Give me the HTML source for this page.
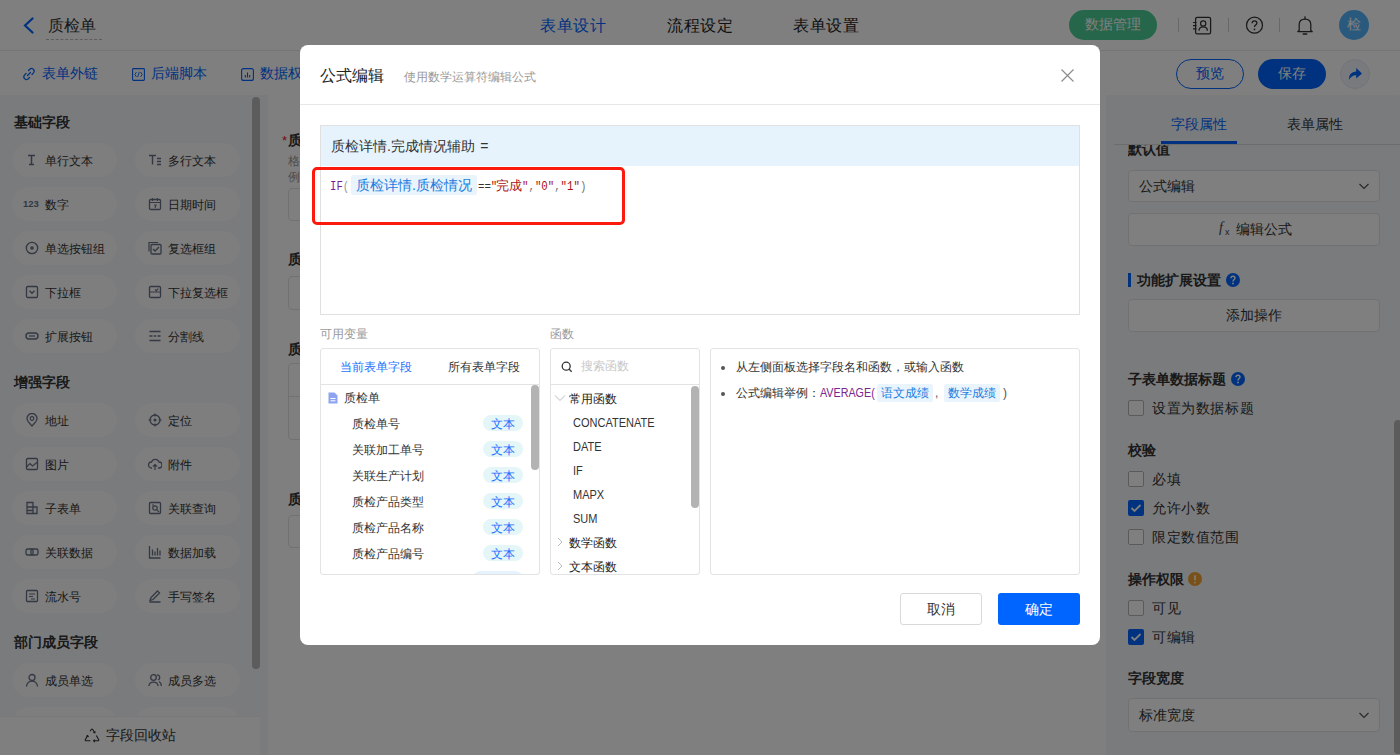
<!DOCTYPE html>
<html><head><meta charset="utf-8">
<style>
*{box-sizing:border-box;margin:0;padding:0}
html,body{width:1400px;height:755px;overflow:hidden;background:#fff;font-family:"Liberation Sans",sans-serif;color:#333}
.a{position:absolute}
.t{position:absolute;white-space:nowrap;line-height:1}
/* header */
#hdr{left:0;top:0;width:1400px;height:51px;background:#fff;border-bottom:1px solid #ececec}
#tb{left:0;top:51px;width:1400px;height:44px;background:#fff;box-shadow:0 1px 3px rgba(0,0,0,.06)}
#lp{left:0;top:95px;width:268px;height:660px;background:#f5f7fa}
#gap{display:none}
#cv{left:268px;top:95px;width:838px;height:660px;background:#fff}
#gap2{display:none}
#rp{left:1106px;top:96px;width:294px;height:659px;background:#f5f7fa}
.pill{position:absolute;width:105px;height:34px;border-radius:17px;background:#fcfcfd;font-size:12px;color:#333}
.pill span{position:absolute;left:33px;top:12px;line-height:12px;white-space:nowrap}
.pill svg{position:absolute;left:13px;top:10px}
.sec{position:absolute;left:14px;font-size:14px;font-weight:bold;color:#333;line-height:14px}
#mask{left:0;top:0;width:1400px;height:755px;background:rgba(0,0,0,.5)}
#modal{left:300px;top:45px;width:800px;height:600px;background:#fff;border-radius:8px}
</style></head><body>
<div id="hdr" class="a"></div>
<div id="tb" class="a"></div>
<div id="lp" class="a"></div>
<div id="gap" class="a"></div>
<div id="cv" class="a"></div>
<div id="gap2" class="a"></div>
<div id="rp" class="a"></div>


<div class="sec" style="top:115px">基础字段</div>
<div class="sec" style="top:375px">增强字段</div>
<div class="sec" style="top:635px">部门成员字段</div>
<div class="pill" style="left:12px;top:143px"><svg width="14" height="14" viewBox="0 0 14 14"><path d="M3 2.5h7M6.5 2.5v9M4 11.5h5" stroke="#667085" stroke-width="1.5" fill="none"/></svg><span>单行文本</span></div>
<div class="pill" style="left:135px;top:143px"><svg width="14" height="14" viewBox="0 0 14 14"><path d="M1 2.5h7M4.5 2.5v9M9 5.5h4M9 8.5h4M9 11.5h4" stroke="#667085" stroke-width="1.4" fill="none"/></svg><span>多行文本</span></div>
<div class="pill" style="left:12px;top:187px"><svg width="18" height="14" viewBox="0 0 18 14" style="left:11px"><text x="0" y="10" font-family="Liberation Sans" font-weight="bold" font-size="9.5" fill="#667085">123</text></svg><span>数字</span></div>
<div class="pill" style="left:135px;top:187px"><svg width="14" height="14" viewBox="0 0 14 14"><rect x="1.5" y="2.5" width="11" height="10" rx="1.2" stroke="#667085" stroke-width="1.3" fill="none"/><path d="M1.5 5.5h11M4.5 1v3M9.5 1v3M6 8h2l-1 3" stroke="#667085" stroke-width="1.1" fill="none"/></svg><span>日期时间</span></div>
<div class="pill" style="left:12px;top:231px"><svg width="14" height="14" viewBox="0 0 14 14"><circle cx="7" cy="7" r="5.7" stroke="#667085" stroke-width="1.3" fill="none"/><circle cx="7" cy="7" r="1.8" fill="#667085"/></svg><span>单选按钮组</span></div>
<div class="pill" style="left:135px;top:231px"><svg width="14" height="14" viewBox="0 0 14 14"><path d="M1 10.5V1.5h9" stroke="#667085" stroke-width="1.2" fill="none"/><rect x="3" y="3.5" width="10" height="9.5" rx="1" stroke="#667085" stroke-width="1.3" fill="none"/><path d="M5 8l2 2 4-4" stroke="#667085" stroke-width="1.3" fill="none"/></svg><span>复选框组</span></div>
<div class="pill" style="left:12px;top:275px"><svg width="14" height="14" viewBox="0 0 14 14"><rect x="1.5" y="1.5" width="11" height="11" rx="1.2" stroke="#667085" stroke-width="1.3" fill="none"/><path d="M4.5 5.8l2.5 2.5 2.5-2.5" stroke="#667085" stroke-width="1.3" fill="none"/></svg><span>下拉框</span></div>
<div class="pill" style="left:135px;top:275px"><svg width="14" height="14" viewBox="0 0 14 14"><rect x="1.5" y="1.5" width="11" height="11" rx="1.2" stroke="#667085" stroke-width="1.3" fill="none"/><path d="M1.5 7h11M7 4.3l1.3 1.3 2-2" stroke="#667085" stroke-width="1.2" fill="none"/></svg><span>下拉复选框</span></div>
<div class="pill" style="left:12px;top:319px"><svg width="14" height="14" viewBox="0 0 14 14"><rect x="1" y="4" width="12" height="6" rx="3" stroke="#667085" stroke-width="1.4" fill="none"/><path d="M4 7h6" stroke="#667085" stroke-width="1.2"/></svg><span>扩展按钮</span></div>
<div class="pill" style="left:135px;top:319px"><svg width="14" height="14" viewBox="0 0 14 14"><path d="M1.5 2.5h11M1.5 7h3M9.5 7h3M5.8 7h2.4M1.5 11.5h11" stroke="#667085" stroke-width="1.3" fill="none"/></svg><span>分割线</span></div>
<div class="pill" style="left:12px;top:403px"><svg width="14" height="14" viewBox="0 0 14 14"><path d="M7 13Q2 8 2 5.5A5 5 0 0 1 12 5.5Q12 8 7 13Z" stroke="#667085" stroke-width="1.3" fill="none"/><circle cx="7" cy="5.5" r="1.8" stroke="#667085" stroke-width="1.2" fill="none"/></svg><span>地址</span></div>
<div class="pill" style="left:135px;top:403px"><svg width="14" height="14" viewBox="0 0 14 14"><circle cx="7" cy="7" r="5" stroke="#667085" stroke-width="1.3" fill="none"/><circle cx="7" cy="7" r="1.5" fill="#667085"/><path d="M7 0.5v3M7 10.5v3M0.5 7h3M10.5 7h3" stroke="#667085" stroke-width="1.2"/></svg><span>定位</span></div>
<div class="pill" style="left:12px;top:447px"><svg width="14" height="14" viewBox="0 0 14 14"><rect x="1.5" y="1.5" width="11" height="11" rx="1.2" stroke="#667085" stroke-width="1.3" fill="none"/><path d="M1.5 10l3.5-3.5 2.5 2.5 5-4" stroke="#667085" stroke-width="1.2" fill="none"/></svg><span>图片</span></div>
<div class="pill" style="left:135px;top:447px"><svg width="14" height="14" viewBox="0 0 14 14"><path d="M4 11H3.5A3 3 0 0 1 3.5 5 4 4 0 0 1 11 5a2.8 2.8 0 0 1 0 6h-1" stroke="#667085" stroke-width="1.3" fill="none"/><path d="M7 13V7.5M5 9.5l2-2 2 2" stroke="#667085" stroke-width="1.2" fill="none"/></svg><span>附件</span></div>
<div class="pill" style="left:12px;top:491px"><svg width="14" height="14" viewBox="0 0 14 14"><path d="M2 1.5h6v11H2zM8 6h4v6.5H8M2 6h6M2 9.5h6" stroke="#667085" stroke-width="1.3" fill="none"/></svg><span>子表单</span></div>
<div class="pill" style="left:135px;top:491px"><svg width="14" height="14" viewBox="0 0 14 14"><rect x="1.5" y="1.5" width="11" height="11" rx="1" stroke="#667085" stroke-width="1.3" fill="none"/><circle cx="7" cy="7" r="2.2" stroke="#667085" stroke-width="1.2" fill="none"/><path d="M8.6 8.6l2.5 2.5M4 4h2" stroke="#667085" stroke-width="1.2"/></svg><span>关联查询</span></div>
<div class="pill" style="left:12px;top:535px"><svg width="14" height="14" viewBox="0 0 14 14"><rect x="1" y="4" width="7" height="6" rx="1.5" stroke="#667085" stroke-width="1.3" fill="none"/><rect x="6" y="4" width="7" height="6" rx="1.5" stroke="#667085" stroke-width="1.3" fill="none"/></svg><span>关联数据</span></div>
<div class="pill" style="left:135px;top:535px"><svg width="14" height="14" viewBox="0 0 14 14"><path d="M1.5 1v12h11M4.5 4.5v6M7 6.5v4M9.5 3v7.5M12 5.5v5" stroke="#667085" stroke-width="1.3" fill="none"/></svg><span>数据加载</span></div>
<div class="pill" style="left:12px;top:579px"><svg width="14" height="14" viewBox="0 0 14 14"><rect x="1.5" y="1.5" width="11" height="11" rx="1" stroke="#667085" stroke-width="1.3" fill="none"/><path d="M4 5h6M4 7.5h4M6 10h4" stroke="#667085" stroke-width="1.2"/></svg><span>流水号</span></div>
<div class="pill" style="left:135px;top:579px"><svg width="14" height="14" viewBox="0 0 14 14"><path d="M2 11.5l1-3 6.5-6.5 2 2-6.5 6.5zM1.5 13h11" stroke="#667085" stroke-width="1.3" fill="none"/></svg><span>手写签名</span></div>
<div class="pill" style="left:12px;top:663px"><svg width="14" height="14" viewBox="0 0 14 14"><circle cx="7" cy="4.5" r="3" stroke="#667085" stroke-width="1.3" fill="none"/><path d="M1.5 13.5A5.5 5.5 0 0 1 12.5 13.5" stroke="#667085" stroke-width="1.3" fill="none"/></svg><span>成员单选</span></div>
<div class="pill" style="left:135px;top:663px"><svg width="14" height="14" viewBox="0 0 14 14"><circle cx="5.5" cy="4.5" r="2.8" stroke="#667085" stroke-width="1.3" fill="none"/><path d="M0.8 13A4.8 4.8 0 0 1 10.2 13M9 1.8A2.7 2.7 0 0 1 10 7M11 8.5Q13.5 10 13.3 13" stroke="#667085" stroke-width="1.3" fill="none"/></svg><span>成员多选</span></div>
<div class="pill" style="left:12px;top:707px"><svg width="14" height="14" viewBox="0 0 14 14"><circle cx="7" cy="4.5" r="3" stroke="#667085" stroke-width="1.3" fill="none"/><path d="M1.5 13.5A5.5 5.5 0 0 1 12.5 13.5" stroke="#667085" stroke-width="1.3" fill="none"/></svg><span>部门单选</span></div>
<div class="pill" style="left:135px;top:707px"><svg width="14" height="14" viewBox="0 0 14 14"><circle cx="5.5" cy="4.5" r="2.8" stroke="#667085" stroke-width="1.3" fill="none"/><path d="M0.8 13A4.8 4.8 0 0 1 10.2 13M9 1.8A2.7 2.7 0 0 1 10 7M11 8.5Q13.5 10 13.3 13" stroke="#667085" stroke-width="1.3" fill="none"/></svg><span>部门多选</span></div>
<div class="a" style="left:252px;top:97px;width:8px;height:572px;border-radius:4px;background:#b8b8b8"></div>
<div class="a" style="left:0;top:716px;width:260px;height:39px;background:#fff;border-top:1px solid #eef0f3"></div>
<svg class="a" style="left:84px;top:728px" width="16" height="15" viewBox="0 0 16 15"><path d="M6.2 3.2 L7.2 1.5 Q8 0.4 8.8 1.5 L10.6 4.6" stroke="#333" stroke-width="1.1" fill="none"/><path d="M9.4 4.4 L10.8 4.8 L11.3 3.4" stroke="#333" stroke-width="1.1" fill="none"/><path d="M12.3 7.4 L14.6 11.4 Q15.2 12.8 13.8 12.8 L9.6 12.8" stroke="#333" stroke-width="1.1" fill="none"/><path d="M10.8 11.6 L9.6 12.8 L10.8 14" stroke="#333" stroke-width="1.1" fill="none"/><path d="M6.4 12.8 L2.2 12.8 Q0.8 12.8 1.4 11.4 L3.6 7.6" stroke="#333" stroke-width="1.1" fill="none"/><path d="M2.4 8.4 L3.6 7.6 L4.6 8.8" stroke="#333" stroke-width="1.1" fill="none"/></svg>
<div class="t" style="left:106px;top:728px;font-size:14px;color:#333">字段回收站</div>

<div class="t" style="left:282px;top:134px;font-size:13px;color:#e02020">*</div>
<div class="t" style="left:288px;top:133px;font-size:14px;font-weight:bold;color:#333">质检单号</div>
<div class="t" style="left:288px;top:155px;font-size:12px;color:#999">格式说明</div>
<div class="t" style="left:288px;top:171px;font-size:12px;color:#999">例如说明</div>
<div class="a" style="left:288px;top:188px;width:300px;height:33px;border:1px solid #e3e3e3;border-radius:4px;background:#fff"></div>
<div class="t" style="left:288px;top:252px;font-size:14px;font-weight:bold;color:#333">质检详情</div>
<div class="a" style="left:288px;top:276px;width:300px;height:34px;border:1px solid #e3e3e3;border-radius:4px;background:#fff"></div>
<div class="t" style="left:288px;top:342px;font-size:14px;font-weight:bold;color:#333">质检详情</div>
<div class="a" style="left:288px;top:363px;width:300px;height:77px;border:1px solid #e3e3e3;border-radius:4px;background:#fff"></div>
<div class="a" style="left:288px;top:396px;width:300px;height:1px;background:#e3e3e3"></div>
<div class="t" style="left:288px;top:492px;font-size:14px;font-weight:bold;color:#333">质检详情</div>
<div class="a" style="left:288px;top:515px;width:300px;height:33px;border:1px solid #e3e3e3;border-radius:4px;background:#fff"></div>


<div class="t" style="left:1171px;top:117px;font-size:14px;color:#0064ff">字段属性</div>
<div class="t" style="left:1287px;top:117px;font-size:14px;color:#333">表单属性</div>
<div class="a" style="left:1114px;top:144px;width:286px;height:1px;background:#d8d8d8"></div>
<div class="a" style="left:1161px;top:141px;width:76px;height:3px;background:#0064ff"></div>
<div class="a" style="left:1128px;top:145px;width:80px;height:14px;overflow:hidden"><div class="t" style="left:0;top:-3px;font-size:14px;font-weight:bold;color:#333">默认值</div></div>
<div class="a" style="left:1128px;top:170px;width:252px;height:32px;border:1px solid #e3e3e3;border-radius:4px;background:#fff"></div>
<div class="t" style="left:1139px;top:179px;font-size:14px;color:#333">公式编辑</div>
<svg class="a" style="left:1358px;top:181px" width="12" height="10" viewBox="0 0 12 10"><path d="M1.5 3l4.5 4.5L10.5 3" stroke="#555" stroke-width="1.2" fill="none"/></svg>
<div class="a" style="left:1128px;top:213px;width:252px;height:33px;border:1px solid #e3e3e3;border-radius:4px;background:#fff"></div>
<div class="t" style="left:1219px;top:221px;font-size:14px;font-style:italic;font-family:'Liberation Serif',serif;color:#444">f</div>
<div class="t" style="left:1225px;top:228px;font-size:9px;color:#444">x</div>
<div class="t" style="left:1236px;top:222px;font-size:14px;color:#333">编辑公式</div>
<div class="a" style="left:1128px;top:273px;width:3px;height:14px;background:#0064ff"></div>
<div class="t" style="left:1137px;top:273px;font-size:14px;font-weight:bold;color:#333">功能扩展设置</div>
<svg class="a" style="left:1226px;top:273px" width="14" height="14" viewBox="0 0 14 14"><circle cx="7" cy="7" r="7" fill="#0064ff"/><path d="M5 5.3Q5 3.3 7 3.3Q9 3.3 9 5.1Q9 6.2 7.8 6.8Q7 7.3 7 8.4" stroke="#fff" stroke-width="1.4" fill="none"/><circle cx="7" cy="10.5" r="0.9" fill="#fff"/></svg>
<div class="a" style="left:1128px;top:299px;width:252px;height:33px;border:1px solid #e3e3e3;border-radius:4px;background:#fff"></div>
<div class="t" style="left:1226px;top:308px;font-size:14px;color:#333">添加操作</div>
<div class="t" style="left:1128px;top:372px;font-size:14px;font-weight:bold;color:#333">子表单数据标题</div>
<svg class="a" style="left:1231px;top:372px" width="14" height="14" viewBox="0 0 14 14"><circle cx="7" cy="7" r="7" fill="#0064ff"/><path d="M5 5.3Q5 3.3 7 3.3Q9 3.3 9 5.1Q9 6.2 7.8 6.8Q7 7.3 7 8.4" stroke="#fff" stroke-width="1.4" fill="none"/><circle cx="7" cy="10.5" r="0.9" fill="#fff"/></svg>
<div class="a" style="left:1128px;top:400px;width:16px;height:16px;border:1px solid #b4b4b4;border-radius:2px;background:#fff"></div>
<div class="t" style="left:1152px;top:401px;font-size:14px;letter-spacing:0.6px;color:#333">设置为数据标题</div>
<div class="t" style="left:1128px;top:443px;font-size:14px;font-weight:bold;color:#333">校验</div>
<div class="a" style="left:1128px;top:471px;width:16px;height:16px;border:1px solid #b4b4b4;border-radius:2px;background:#fff"></div>
<div class="t" style="left:1152px;top:472px;font-size:14px;letter-spacing:0.6px;color:#333">必填</div>
<div class="a" style="left:1128px;top:500px;width:16px;height:16px;border-radius:2px;background:#0064ff"></div>
<svg class="a" style="left:1128px;top:500px" width="16" height="16" viewBox="0 0 16 16"><path d="M3.5 8l3 3 6-6" stroke="#fff" stroke-width="1.8" fill="none"/></svg>
<div class="t" style="left:1152px;top:501px;font-size:14px;letter-spacing:0.6px;color:#333">允许小数</div>
<div class="a" style="left:1128px;top:529px;width:16px;height:16px;border:1px solid #b4b4b4;border-radius:2px;background:#fff"></div>
<div class="t" style="left:1152px;top:530px;font-size:14px;letter-spacing:0.6px;color:#333">限定数值范围</div>
<div class="t" style="left:1128px;top:572px;font-size:14px;font-weight:bold;color:#333">操作权限</div>
<svg class="a" style="left:1188px;top:572px" width="14" height="14" viewBox="0 0 14 14"><circle cx="7" cy="7" r="7" fill="#f0a030"/><path d="M7 3.2v5" stroke="#fff" stroke-width="1.6"/><circle cx="7" cy="10.6" r="0.9" fill="#fff"/></svg>
<div class="a" style="left:1128px;top:600px;width:16px;height:16px;border:1px solid #b4b4b4;border-radius:2px;background:#fff"></div>
<div class="t" style="left:1152px;top:601px;font-size:14px;letter-spacing:0.6px;color:#333">可见</div>
<div class="a" style="left:1128px;top:629px;width:16px;height:16px;border-radius:2px;background:#0064ff"></div>
<svg class="a" style="left:1128px;top:629px" width="16" height="16" viewBox="0 0 16 16"><path d="M3.5 8l3 3 6-6" stroke="#fff" stroke-width="1.8" fill="none"/></svg>
<div class="t" style="left:1152px;top:630px;font-size:14px;letter-spacing:0.6px;color:#333">可编辑</div>
<div class="t" style="left:1128px;top:671px;font-size:14px;font-weight:bold;color:#333">字段宽度</div>
<div class="a" style="left:1128px;top:698px;width:252px;height:34px;border:1px solid #e3e3e3;border-radius:4px;background:#fff"></div>
<div class="t" style="left:1139px;top:708px;font-size:14px;color:#333">标准宽度</div>
<svg class="a" style="left:1358px;top:710px" width="12" height="10" viewBox="0 0 12 10"><path d="M1.5 3l4.5 4.5L10.5 3" stroke="#555" stroke-width="1.2" fill="none"/></svg>
<div class="a" style="left:1394px;top:420px;width:8px;height:334px;border-radius:4px;background:#b8b8b8"></div>

<!-- header content -->
<svg class="a" style="left:22px;top:17px" width="14" height="17" viewBox="0 0 14 17"><path d="M10.5 1.5 L3 8.5 L10.5 15.5" fill="none" stroke="#0064ff" stroke-width="2.2" stroke-linecap="round"/></svg>
<div class="t" style="left:48px;top:18px;font-size:16px;color:#333">质检单</div>
<div class="a" style="left:46px;top:39px;width:56px;border-top:1px dashed #bbb"></div>
<div class="t" style="left:540px;top:18px;font-size:16px;letter-spacing:0.7px;color:#0064ff">表单设计</div>
<div class="t" style="left:667px;top:18px;font-size:16px;letter-spacing:0.7px;color:#222">流程设定</div>
<div class="t" style="left:793px;top:18px;font-size:16px;letter-spacing:0.7px;color:#222">表单设置</div>
<div class="a" style="left:1069px;top:10px;width:88px;height:30px;border-radius:15px;background:#4ccc94"></div>
<div class="t" style="left:1085px;top:17px;font-size:14px;color:#fff">数据管理</div>
<div class="a" style="left:1178px;top:18px;width:1px;height:14px;background:#d0d0d0"></div>
<div class="a" style="left:1228px;top:18px;width:1px;height:14px;background:#d0d0d0"></div>
<div class="a" style="left:1279px;top:18px;width:1px;height:14px;background:#d0d0d0"></div>
<svg class="a" style="left:1189px;top:14px" width="24" height="24" viewBox="0 0 24 24"><rect x="6.6" y="3.3" width="15" height="16.6" rx="1.6" fill="none" stroke="#333" stroke-width="1.25"/><path d="M4 8.5h3.5M4 11.7h3.5M4 14.9h3.5" stroke="#333" stroke-width="1.2"/><circle cx="14.2" cy="9.4" r="2.6" fill="none" stroke="#333" stroke-width="1.2"/><path d="M10 16.8 Q10 12.8 14.2 12.8 Q18.4 12.8 18.4 16.8" fill="none" stroke="#333" stroke-width="1.2"/></svg>
<svg class="a" style="left:1244px;top:15px" width="21" height="21" viewBox="0 0 21 21"><circle cx="10.5" cy="10.2" r="8" fill="none" stroke="#333" stroke-width="1.25"/><path d="M8.1 8.2 Q8.1 5.8 10.5 5.8 Q12.9 5.8 12.9 8 Q12.9 9.3 11.5 10.1 Q10.5 10.7 10.5 12" fill="none" stroke="#333" stroke-width="1.25"/><circle cx="10.5" cy="14.4" r="0.85" fill="#333"/></svg>
<svg class="a" style="left:1295px;top:15px" width="20" height="21" viewBox="0 0 20 21"><path d="M4.2 15.5 L4.2 9.5 Q4.2 4 10 4 Q15.8 4 15.8 9.5 L15.8 15.5 L17.2 16.6 L2.8 16.6 Z" fill="none" stroke="#333" stroke-width="1.25" stroke-linejoin="round"/><path d="M10 1.8v2" stroke="#333" stroke-width="1.3" stroke-linecap="round"/><path d="M8.2 19h3.6" stroke="#333" stroke-width="1.3" stroke-linecap="round"/></svg>
<div class="a" style="left:1339px;top:10px;width:30px;height:30px;border-radius:15px;background:#52b4fa"></div>
<div class="t" style="left:1347px;top:17px;font-size:14px;color:#fff">检</div>
<!-- toolbar -->
<svg class="a" style="left:22px;top:67px" width="14" height="14" viewBox="0 0 14 14"><path d="M5.5 8.5 L8.5 5.5 M6.5 3.5 L8 2 Q10 0.5 11.5 2.5 Q13 4 11.5 5.8 L10 7.5 M7.5 10.5 L6 12 Q4 13.5 2.5 11.5 Q1 10 2.5 8.2 L4 6.5" fill="none" stroke="#0064ff" stroke-width="1.2" stroke-linecap="round"/></svg>
<div class="t" style="left:42px;top:66px;font-size:14px;color:#0064ff">表单外链</div>
<svg class="a" style="left:132px;top:68px" width="13" height="13" viewBox="0 0 13 13"><rect x="0.6" y="0.6" width="11.8" height="11.8" rx="0.8" fill="none" stroke="#0064ff" stroke-width="1.1"/><path d="M4.5 4 L2.8 6.5 L4.5 9 M8.5 4 L10.2 6.5 L8.5 9 M7.3 3.8 L5.7 9.2" fill="none" stroke="#0064ff" stroke-width="0.9"/></svg>
<div class="t" style="left:151px;top:66px;font-size:14px;color:#0064ff">后端脚本</div>
<svg class="a" style="left:241px;top:68px" width="13" height="13" viewBox="0 0 13 13"><rect x="0.6" y="0.6" width="11.8" height="11.8" rx="2" fill="none" stroke="#0064ff" stroke-width="1.1"/><path d="M4.3 9.5V7M6.5 9.5V4.5M8.7 9.5V7" stroke="#0064ff" stroke-width="1.1"/></svg>
<div class="t" style="left:260px;top:66px;font-size:14px;color:#0064ff">数据权限</div>
<div class="a" style="left:1176px;top:59px;width:68px;height:30px;border-radius:15px;border:1px solid #0064ff"></div>
<div class="t" style="left:1196px;top:66px;font-size:14px;color:#0064ff">预览</div>
<div class="a" style="left:1258px;top:59px;width:68px;height:30px;border-radius:15px;background:#0064ff"></div>
<div class="t" style="left:1278px;top:66px;font-size:14px;color:#fff">保存</div>
<div class="a" style="left:1340px;top:59px;width:30px;height:30px;border-radius:15px;background:#f2f5fb;border:1px solid #e3e8f2"></div>
<svg class="a" style="left:1347px;top:66px" width="16" height="16" viewBox="0 0 16 16"><path d="M1.8 14 Q1.5 6.2 9.2 5.6 L9.2 2 L15 7.4 L9.2 12.6 L9.2 9.2 Q4.6 9 1.8 14Z" fill="#0064ff"/></svg>

<div id="mask" class="a"></div>
<div id="modal" class="a"></div>

<div class="t" style="left:320px;top:68px;font-size:16px;color:#222">公式编辑</div>
<div class="t" style="left:404px;top:71px;font-size:12px;color:#999">使用数学运算符编辑公式</div>
<svg class="a" style="left:1060px;top:68px" width="15" height="15" viewBox="0 0 15 15"><path d="M1.5 1.5l12 12M13.5 1.5l-12 12" stroke="#8c8c8c" stroke-width="1.15"/></svg>
<div class="a" style="left:300px;top:104px;width:800px;height:1px;background:#e8e8e8"></div>
<div class="a" style="left:320px;top:125px;width:760px;height:190px;border:1px solid #e0e0e0"></div>
<div class="a" style="left:321px;top:126px;width:758px;height:40px;background:#e6f3fd"></div>
<div class="t" style="left:331px;top:139px;font-size:14px;color:#333">质检详情.完成情况辅助 <span style="margin-left:1.5px">=</span></div>
<div class="t" style="left:330px;top:181px;font-family:'Liberation Mono',monospace;font-size:12.5px;transform:scaleX(0.857);transform-origin:0 0;color:#7a1c96">IF<span style="color:#999">(</span></div>
<div class="a" style="left:351px;top:175px;width:126px;height:20px;border-radius:2px;background:#eaf4fd"></div>
<div class="t" style="left:356px;top:178px;font-size:14px;color:#1a7de0">质检详情.质检情况</div>
<div class="t" style="left:478px;top:181px;font-family:'Liberation Mono',monospace;font-size:12.5px;transform:scaleX(0.857);transform-origin:0 0;color:#333">==<span style="color:#a11">"</span></div><div class="t" style="left:496px;top:179px;font-size:13px;color:#a11">完成</div><div class="t" style="left:522px;top:181px;font-family:'Liberation Mono',monospace;font-size:12.5px;transform:scaleX(0.857);transform-origin:0 0;color:#a11">"<span style="color:#777">,</span>"0"<span style="color:#777">,</span>"1"<span style="color:#777">)</span></div>
<div class="a" style="left:312px;top:167px;width:313px;height:58px;border:3px solid #fc1a0e;border-radius:5px"></div>
<div class="t" style="left:320px;top:328px;font-size:12px;color:#999">可用变量</div>
<div class="t" style="left:550px;top:328px;font-size:12px;color:#999">函数</div>
<div class="a" style="left:320px;top:348px;width:220px;height:227px;border:1px solid #e3e3e3;border-radius:3px"></div>
<div class="a" style="left:321px;top:384px;width:218px;height:1px;background:#e3e3e3"></div>
<div class="t" style="left:340px;top:361px;font-size:12px;color:#1e6fff">当前表单字段</div>
<div class="t" style="left:448px;top:361px;font-size:12px;color:#333">所有表单字段</div>
<svg class="a" style="left:327px;top:392px" width="12" height="12" viewBox="0 0 12 12"><path d="M1.5 0.5h6l3 3v8h-9z" fill="#8da4f0"/><path d="M3.5 6.5h5M3.5 8.8h5" stroke="#fff" stroke-width="1"/></svg>
<div class="t" style="left:344px;top:392px;font-size:12px;color:#333">质检单</div>
<div class="t" style="left:352px;top:418px;font-size:12px;color:#333">质检单号</div>
<div class="a" style="left:483px;top:415px;width:40px;height:16px;border-radius:8px;background:#e5f6f8"></div>
<div class="t" style="left:491px;top:418px;font-size:12px;color:#1e6fff">文本</div>
<div class="t" style="left:352px;top:444px;font-size:12px;color:#333">关联加工单号</div>
<div class="a" style="left:483px;top:441px;width:40px;height:16px;border-radius:8px;background:#e5f6f8"></div>
<div class="t" style="left:491px;top:444px;font-size:12px;color:#1e6fff">文本</div>
<div class="t" style="left:352px;top:470px;font-size:12px;color:#333">关联生产计划</div>
<div class="a" style="left:483px;top:467px;width:40px;height:16px;border-radius:8px;background:#e5f6f8"></div>
<div class="t" style="left:491px;top:470px;font-size:12px;color:#1e6fff">文本</div>
<div class="t" style="left:352px;top:496px;font-size:12px;color:#333">质检产品类型</div>
<div class="a" style="left:483px;top:493px;width:40px;height:16px;border-radius:8px;background:#e5f6f8"></div>
<div class="t" style="left:491px;top:496px;font-size:12px;color:#1e6fff">文本</div>
<div class="t" style="left:352px;top:522px;font-size:12px;color:#333">质检产品名称</div>
<div class="a" style="left:483px;top:519px;width:40px;height:16px;border-radius:8px;background:#e5f6f8"></div>
<div class="t" style="left:491px;top:522px;font-size:12px;color:#1e6fff">文本</div>
<div class="t" style="left:352px;top:548px;font-size:12px;color:#333">质检产品编号</div>
<div class="a" style="left:483px;top:545px;width:40px;height:16px;border-radius:8px;background:#e5f6f8"></div>
<div class="t" style="left:491px;top:548px;font-size:12px;color:#1e6fff">文本</div>

<div class="a" style="left:321px;top:571px;width:218px;height:3px;overflow:hidden"><div class="a" style="left:152px;top:0;width:50px;height:16px;border-radius:8px;background:#e6f2fd"></div></div>
<div class="a" style="left:531px;top:385px;width:8px;height:85px;border-radius:4px;background:#b3b3b3"></div>
<div class="a" style="left:550px;top:348px;width:150px;height:227px;border:1px solid #e3e3e3;border-radius:3px"></div>
<div class="a" style="left:551px;top:384px;width:148px;height:1px;background:#e3e3e3"></div>
<svg class="a" style="left:561px;top:361px" width="12" height="12" viewBox="0 0 12 12"><circle cx="5.2" cy="5.2" r="4" stroke="#333" stroke-width="1.3" fill="none"/><path d="M8.2 8.2l2.5 2.5" stroke="#333" stroke-width="1.3"/></svg>
<div class="t" style="left:581px;top:360px;font-size:12px;color:#c8c8c8">搜索函数</div>
<svg class="a" style="left:554px;top:394px" width="12" height="8" viewBox="0 0 12 8"><path d="M1 1.5l5 5 5-5" stroke="#bbb" stroke-width="1" fill="none"/></svg>
<div class="t" style="left:569px;top:393px;font-size:12px;color:#222">常用函数</div>
<div class="t" style="left:573px;top:417px;font-size:12.5px;color:#333;transform:scaleX(0.88);transform-origin:0 0">CONCATENATE</div>
<div class="t" style="left:573px;top:441px;font-size:12.5px;color:#333;transform:scaleX(0.88);transform-origin:0 0">DATE</div>
<div class="t" style="left:573px;top:465px;font-size:12.5px;color:#333;transform:scaleX(0.88);transform-origin:0 0">IF</div>
<div class="t" style="left:573px;top:489px;font-size:12.5px;color:#333;transform:scaleX(0.88);transform-origin:0 0">MAPX</div>
<div class="t" style="left:573px;top:513px;font-size:12.5px;color:#333;transform:scaleX(0.88);transform-origin:0 0">SUM</div>

<svg class="a" style="left:557px;top:537px" width="6" height="10" viewBox="0 0 6 10"><path d="M1 1l4 4-4 4" stroke="#bbb" stroke-width="1" fill="none"/></svg>
<div class="t" style="left:569px;top:537px;font-size:12px;color:#222">数学函数</div>
<svg class="a" style="left:557px;top:561px" width="6" height="10" viewBox="0 0 6 10"><path d="M1 1l4 4-4 4" stroke="#bbb" stroke-width="1" fill="none"/></svg>
<div class="a" style="left:551px;top:560px;width:148px;height:14px;overflow:hidden"><div class="t" style="left:18px;top:1px;font-size:12px;color:#222">文本函数</div></div>
<div class="a" style="left:691px;top:386px;width:8px;height:122px;border-radius:4px;background:#b3b3b3"></div>
<div class="a" style="left:710px;top:348px;width:370px;height:227px;border:1px solid #e3e3e3;border-radius:3px"></div>
<div class="a" style="left:721px;top:366px;width:4px;height:4px;border-radius:2px;background:#555"></div>
<div class="t" style="left:736px;top:361px;font-size:12px;color:#333">从左侧面板选择字段名和函数，或输入函数</div>
<div class="a" style="left:721px;top:392px;width:4px;height:4px;border-radius:2px;background:#555"></div>
<div class="t" style="left:736px;top:387px;font-size:12px;color:#333">公式编辑举例：</div>
<div class="t" style="left:820px;top:387px;font-size:12px;color:#7a2590;transform:scaleX(0.895);transform-origin:0 0">AVERAGE(</div>
<div class="a" style="left:877px;top:384px;width:56px;height:18px;border-radius:2px;background:#eaf4fd"></div>
<div class="t" style="left:881px;top:387px;font-size:12px;color:#1a7de0">语文成绩</div>
<div class="t" style="left:935px;top:387px;font-size:12px;color:#555">,</div>
<div class="a" style="left:944px;top:384px;width:56px;height:18px;border-radius:2px;background:#eaf4fd"></div>
<div class="t" style="left:948px;top:387px;font-size:12px;color:#1a7de0">数学成绩</div>
<div class="t" style="left:1003px;top:387px;font-size:12px;color:#555">)</div>
<div class="a" style="left:900px;top:593px;width:82px;height:32px;border:1px solid #d9d9d9;border-radius:3px"></div>
<div class="t" style="left:927px;top:602px;font-size:14px;color:#333">取消</div>
<div class="a" style="left:998px;top:593px;width:82px;height:32px;border-radius:3px;background:#0064ff"></div>
<div class="t" style="left:1025px;top:602px;font-size:14px;color:#fff">确定</div>
</body></html>
